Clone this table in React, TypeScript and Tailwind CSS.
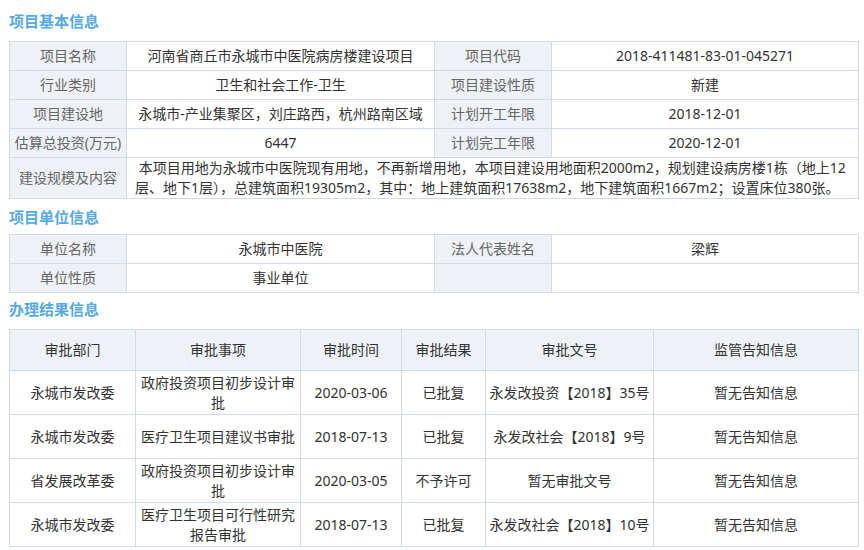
import React from 'react';

const FONT = "font-['Noto_Sans','Microsoft_YaHei','Noto_Sans_CJK_SC',sans-serif]";

const SectionTitle: React.FC<{ text: string; h: string }> = ({ text, h }) => (
  <div className={`${h} flex items-center text-[15px] font-bold text-[#55a9e4] font-['Noto_Sans_CJK_SC',sans-serif]`}>{text}</div>
);

const labelCls = 'border border-[#cfdce8] bg-[#eef2f6] text-[#666] text-center align-middle px-1';
const valueCls = 'border border-[#cfdce8] bg-white text-[#333] text-center align-middle px-1';
const cellCls = 'border border-[#cfdce8] bg-white text-[#333] text-center align-middle px-0.5';

const basicRows: [string, string, string, string][] = [
  ['项目名称', '河南省商丘市永城市中医院病房楼建设项目', '项目代码', '2018-411481-83-01-045271'],
  ['行业类别', '卫生和社会工作-卫生', '项目建设性质', '新建'],
  ['项目建设地', '永城市-产业集聚区，刘庄路西，杭州路南区域', '计划开工年限', '2018-12-01'],
  ['估算总投资(万元)', '6447', '计划完工年限', '2020-12-01'],
];

const results = [
  { dept: '永城市发改委', item: '政府投资项目初步设计审批', date: '2020-03-06', result: '已批复', doc: '永发改投资【2018】35号' },
  { dept: '永城市发改委', item: '医疗卫生项目建议书审批', date: '2018-07-13', result: '已批复', doc: '永发改社会【2018】9号' },
  { dept: '省发展改革委', item: '政府投资项目初步设计审批', date: '2020-03-05', result: '不予许可', doc: '暂无审批文号' },
  { dept: '永城市发改委', item: '医疗卫生项目可行性研究报告审批', date: '2018-07-13', result: '已批复', doc: '永发改社会【2018】10号' },
];

export default function App() {
  return (
    <div className={`${FONT} w-[864px] h-[550px] bg-white pl-[9px] text-[14px] leading-[20px] overflow-hidden`}>
      <SectionTitle text="项目基本信息" h="h-[41px]" />
      <table className="w-[849px] table-fixed border-collapse">
        <colgroup>
          <col className="w-[117px]" />
          <col className="w-[308px]" />
          <col className="w-[117px]" />
          <col className="w-[307px]" />
        </colgroup>
        <tbody>
          {basicRows.map((r) => (
            <tr key={r[0]} className="h-[29px]">
              <td className={labelCls}>{r[0]}</td>
              <td className={valueCls}>{r[1]}</td>
              <td className={labelCls}>{r[2]}</td>
              <td className={valueCls}>{r[3]}</td>
            </tr>
          ))}
          <tr className="h-[41px]">
            <td className={labelCls}>建设规模及内容</td>
            <td colSpan={3} className="border border-[#cfdce8] bg-white text-[#333] text-left align-middle pl-2 pr-1">
              {'\u00a0本项目用地为永城市中医院现有用地，不再新增用地，本项目建设用地面积2000m2，规划建设病房楼1栋（地上12层、地下1层），总建筑面积19305m2，其中：地上建筑面积17638m2，地下建筑面积1667m2；设置床位380张。'}
            </td>
          </tr>
        </tbody>
      </table>

      <SectionTitle text="项目单位信息" h="h-[35px]" />
      <table className="w-[849px] table-fixed border-collapse">
        <colgroup>
          <col className="w-[117px]" />
          <col className="w-[308px]" />
          <col className="w-[117px]" />
          <col className="w-[307px]" />
        </colgroup>
        <tbody>
          <tr className="h-[29px]">
            <td className={labelCls}>单位名称</td>
            <td className={valueCls}>永城市中医院</td>
            <td className={labelCls}>法人代表姓名</td>
            <td className={valueCls}>梁辉</td>
          </tr>
          <tr className="h-[29px]">
            <td className={labelCls}>单位性质</td>
            <td className={valueCls}>事业单位</td>
            <td className={labelCls}></td>
            <td className={valueCls}></td>
          </tr>
        </tbody>
      </table>

      <SectionTitle text="办理结果信息" h="h-[36px] pb-[5px]" />
      <table className="w-[849px] table-fixed border-collapse">
        <colgroup>
          <col className="w-[126px]" />
          <col className="w-[165px]" />
          <col className="w-[101px]" />
          <col className="w-[84px]" />
          <col className="w-[168px]" />
          <col className="w-[205px]" />
        </colgroup>
        <thead>
          <tr className="h-[41px]">
            {['审批部门', '审批事项', '审批时间', '审批结果', '审批文号', '监管告知信息'].map((h) => (
              <th key={h} className="border border-[#cfdce8] bg-[#eef2f6] text-[#333] font-normal text-center align-middle px-0.5">
                {h}
              </th>
            ))}
          </tr>
        </thead>
        <tbody>
          {results.map((r, i) => (
            <tr key={i} className="h-[44px]">
              <td className={cellCls}>{r.dept}</td>
              <td className={cellCls}>{r.item}</td>
              <td className={cellCls}>{r.date}</td>
              <td className={cellCls}>{r.result}</td>
              <td className={`${cellCls} whitespace-nowrap`}>{r.doc}</td>
              <td className={cellCls}>暂无告知信息</td>
            </tr>
          ))}
        </tbody>
      </table>
    </div>
  );
}
